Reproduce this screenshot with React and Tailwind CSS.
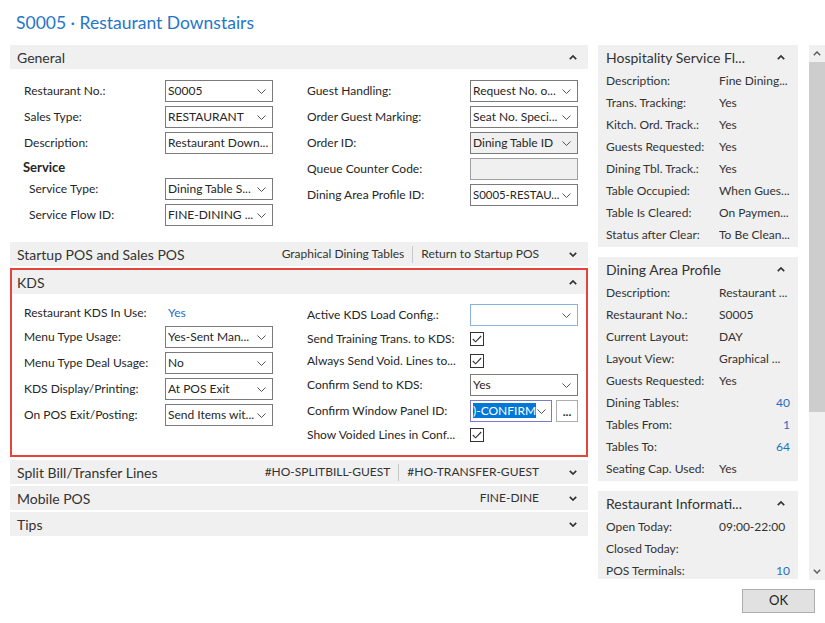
import React from 'react';

const Chev = () => (
  <svg width="9" height="5" viewBox="0 0 9 5" className="shrink-0">
    <polyline points="0.5,0.5 4.5,4.5 8.5,0.5" fill="none" stroke="#555" strokeWidth="1" />
  </svg>
);

const Caret = ({ down }) => (
  <svg width="8" height="5" viewBox="0 0 8 5" className="shrink-0">
    <polyline
      points={down ? '0.8,0.8 4,4 7.2,0.8' : '0.8,4.2 4,1 7.2,4.2'}
      fill="none"
      stroke="#333"
      strokeWidth="1.7"
    />
  </svg>
);

const Select = ({ value, small }) => (
  <div className="w-[108px] h-[22px] border border-[#7a7a7a] bg-white flex items-center pl-[2px] pr-[6px]">
    <span className={`flex-1 overflow-hidden whitespace-nowrap ${small ? 'text-[11.4px]' : ''}`}>{value}</span>
    <Chev />
  </div>
);

const Check = () => (
  <div className="w-[14px] h-[14px] border border-[#333] bg-white flex items-center justify-center">
    <svg width="10" height="8" viewBox="0 0 10 8">
      <polyline points="0.8,4 3.6,6.8 9.2,1" fill="none" stroke="#333" strokeWidth="1.1" />
    </svg>
  </div>
);

const Field = ({ label, lw = 'w-[141px]', h = 'h-[22px]', children }) => (
  <div className={`flex items-center ${h}`}>
    <div className={`${lw} shrink-0 whitespace-nowrap`}>{label}</div>
    {children}
  </div>
);

const Bar = ({ title, right, open }) => (
  <div className="h-[24px] bg-[#f0f0f0] flex items-center pl-[7px] pr-[11px]">
    <span className="text-[14px] text-[#333] flex-1">{title}</span>
    {right && (
      <div className="flex items-center mr-[30px] text-[#333]">
        {right.map((r, i) => (
          <React.Fragment key={r}>
            {i > 0 && <span className="w-px h-[17px] bg-[#c8c8c8] mx-[8px]" />}
            <span>{r}</span>
          </React.Fragment>
        ))}
      </div>
    )}
    <Caret down={!open} />
  </div>
);

const FactBox = ({ title, rows, clip }) => (
  <div className={`bg-[#f0f0f0] px-[8px] pb-px ${clip ? 'h-[88px] overflow-hidden' : ''}`}>
    <div className="h-[25px] flex items-center pr-[5px]">
      <span className="text-[14px] text-[#333] flex-1 whitespace-nowrap">{title}</span>
      <Caret />
    </div>
    <div>
      {rows.map(([l, v, num]) => (
        <div key={l} className="h-[22px] flex items-center">
          <span className="w-[113px] shrink-0 whitespace-nowrap">{l}</span>
          <span className={`flex-1 whitespace-nowrap overflow-hidden ${num ? 'text-right text-[#1f6fc5]' : ''}`}>{v}</span>
        </div>
      ))}
    </div>
  </div>
);

export default function App() {
  return (
    <div className="w-[825px] h-[623px] bg-white overflow-hidden font-['Lato',sans-serif] text-[12px] text-[#262626]">
      <div className="h-[45px] pl-[16px] pt-[11px] text-[17.5px] leading-[24px] text-[#2676c8]">
        S0005 · Restaurant Downstairs
      </div>

      <div className="flex h-[535px]">
        {/* main form */}
        <div className="ml-[10px] w-[578px] flex flex-col">
          <Bar title="General" open />
          <div className="flex pl-[14px] pr-[10px] pt-[11px] pb-[16px]">
            <div className="w-[249px] flex flex-col gap-[4px]">
              <Field label="Restaurant No.:"><Select value="S0005" /></Field>
              <Field label="Sales Type:"><Select value="RESTAURANT" /></Field>
              <Field label="Description:">
                <div className="w-[108px] h-[22px] border border-[#7a7a7a] flex items-center pl-[2px] whitespace-nowrap overflow-hidden">
                  Restaurant Down...
                </div>
              </Field>
              <div className="h-[16px] flex items-center font-bold text-[13px] -ml-px pt-[3px]">Service</div>
              <div className="pl-[5px] flex flex-col gap-[4px]">
                <Field label="Service Type:" lw="w-[136px]"><Select value="Dining Table S..." /></Field>
                <Field label="Service Flow ID:" lw="w-[136px]"><Select value="FINE-DINING ..." /></Field>
              </div>
            </div>
            <div className="ml-[34px] w-[271px] flex flex-col gap-[4px]">
              <Field label="Guest Handling:" lw="w-[163px]"><Select value="Request No. o..." /></Field>
              <Field label="Order Guest Marking:" lw="w-[163px]"><Select value="Seat No. Speci..." /></Field>
              <Field label="Order ID:" lw="w-[163px]">
                <div className="w-[108px] h-[22px] border border-[#7a7a7a] bg-[#f0f0f0] flex items-center pl-[2px] pr-[6px]">
                  <span className="flex-1 whitespace-nowrap">Dining Table ID</span>
                  <Chev />
                </div>
              </Field>
              <Field label="Queue Counter Code:" lw="w-[163px]">
                <div className="w-[108px] h-[22px] border border-[#a0a0a0] bg-[#f0f0f0]" />
              </Field>
              <Field label="Dining Area Profile ID:" lw="w-[163px]"><Select value="S0005-RESTAU..." small /></Field>
            </div>
          </div>

          <Bar title="Startup POS and Sales POS" right={['Graphical Dining Tables', 'Return to Startup POS']} />

          {/* KDS */}
          <div className="mt-[2px] border-2 border-[#e5443b]">
            <div className="h-[24px] bg-[#f0f0f0] flex items-center pl-[5px] pr-[9px]">
              <span className="text-[14px] text-[#333] flex-1">KDS</span>
              <Caret />
            </div>
            <div className="flex pl-[12px] pr-[8px] pt-[10px] pb-[11px]">
              <div className="w-[249px] flex flex-col gap-[4px]">
                <Field label="Restaurant KDS In Use:" h="h-[18px]">
                  <span className="pl-[3px] text-[#1f6fc5]">Yes</span>
                </Field>
                <Field label="Menu Type Usage:"><Select value="Yes-Sent Man..." /></Field>
                <Field label="Menu Type Deal Usage:"><Select value="No" /></Field>
                <Field label="KDS Display/Printing:"><Select value="At POS Exit" /></Field>
                <Field label="On POS Exit/Posting:"><Select value="Send Items wit..." /></Field>
              </div>
              <div className="ml-[34px] w-[271px] flex flex-col gap-[4px]">
                <Field label="Active KDS Load Config.:" lw="w-[163px]">
                  <div className="w-[108px] h-[22px] border border-[#86b3e0] bg-white flex items-center justify-end pr-[6px]">
                    <Chev />
                  </div>
                </Field>
                <Field label="Send Training Trans. to KDS:" lw="w-[163px]" h="h-[18px]"><Check /></Field>
                <Field label="Always Send Void. Lines to..." lw="w-[163px]" h="h-[18px]"><Check /></Field>
                <Field label="Confirm Send to KDS:" lw="w-[163px]"><Select value="Yes" /></Field>
                <Field label="Confirm Window Panel ID:" lw="w-[163px]">
                  <div className="w-[82px] h-[22px] border border-[#7a7ac8] bg-white flex items-center pl-[2px] pr-[5px]">
                    <span className="flex-1 overflow-hidden whitespace-nowrap">
                      <span className="bg-[#0078d7] text-white">)-CONFIRM</span>
                    </span>
                    <Chev />
                  </div>
                  <div className="ml-[4px] w-[22px] h-[22px] border border-[#adadad] bg-white flex items-end justify-center pb-[5px] font-bold leading-[8px]">
                    ...
                  </div>
                </Field>
                <Field label="Show Voided Lines in Conf..." lw="w-[163px]" h="h-[18px]"><Check /></Field>
              </div>
            </div>
          </div>

          <div className="mt-[3px] flex flex-col gap-[2px]">
            <Bar title="Split Bill/Transfer Lines" right={['#HO-SPLITBILL-GUEST', '#HO-TRANSFER-GUEST']} />
            <Bar title="Mobile POS" right={['FINE-DINE']} />
            <Bar title="Tips" />
          </div>
        </div>

        {/* fact boxes */}
        <div className="ml-[10px] w-[200px] flex flex-col gap-[10px] text-[#333]">
          <FactBox
            title="Hospitality Service Fl..."
            rows={[
              ['Description:', 'Fine Dining...'],
              ['Trans. Tracking:', 'Yes'],
              ['Kitch. Ord. Track.:', 'Yes'],
              ['Guests Requested:', 'Yes'],
              ['Dining Tbl. Track.:', 'Yes'],
              ['Table Occupied:', 'When Gues...'],
              ['Table Is Cleared:', 'On Paymen...'],
              ['Status after Clear:', 'To Be Clean...'],
            ]}
          />
          <FactBox
            title="Dining Area Profile"
            rows={[
              ['Description:', 'Restaurant ...'],
              ['Restaurant No.:', 'S0005'],
              ['Current Layout:', 'DAY'],
              ['Layout View:', 'Graphical ...'],
              ['Guests Requested:', 'Yes'],
              ['Dining Tables:', '40', true],
              ['Tables From:', '1', true],
              ['Tables To:', '64', true],
              ['Seating Cap. Used:', 'Yes'],
            ]}
          />
          <FactBox
            title="Restaurant Informati..."
            clip
            rows={[
              ['Open Today:', '09:00-22:00'],
              ['Closed Today:', ''],
              ['POS Terminals:', '10', true],
            ]}
          />
        </div>

        {/* scrollbar */}
        <div className="ml-[11px] w-[16px] h-[535px] bg-[#f0f0f0] flex flex-col items-center">
          <div className="h-[17px] flex items-center justify-center">
            <svg width="8" height="5" viewBox="0 0 8 5">
              <polyline points="0.8,4.2 4,1 7.2,4.2" fill="none" stroke="#606060" strokeWidth="1.5" />
            </svg>
          </div>
          <div className="w-full h-[350px] bg-[#cdcdcd]" />
          <div className="flex-1" />
          <div className="h-[17px] flex items-center justify-center">
            <svg width="8" height="5" viewBox="0 0 8 5">
              <polyline points="0.8,0.8 4,4 7.2,0.8" fill="none" stroke="#606060" strokeWidth="1.5" />
            </svg>
          </div>
        </div>
      </div>

      <div className="flex justify-end pr-[10px] mt-[9px]">
        <button className="w-[73px] h-[24px] bg-[#e1e1e1] border border-[#adadad] text-[13px] text-[#222]">OK</button>
      </div>
    </div>
  );
}
